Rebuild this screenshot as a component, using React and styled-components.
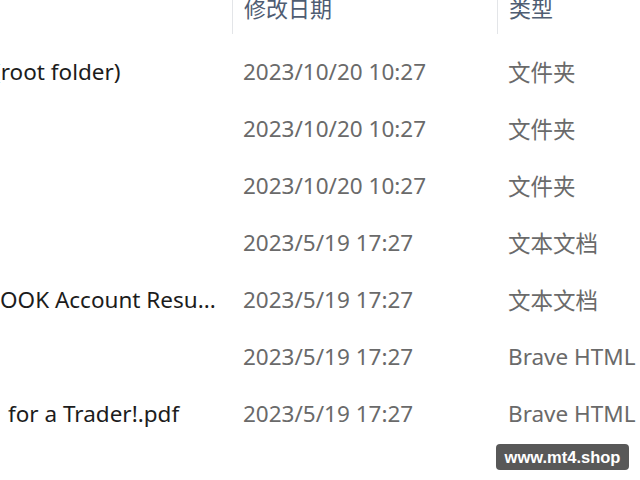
import React from 'react'
import styled, { createGlobalStyle } from 'styled-components'

const GlobalStyle = createGlobalStyle`
    html, body {
        margin: 0;
        padding: 0;
        background: #ffffff;
    }
    body {
        width: 640px;
        height: 480px;
        overflow: hidden;
        font-family: "Noto Sans", "Open Sans", "Noto Sans CJK SC", sans-serif;
    }
`

const Explorer = styled.div`
    position: relative;
    width: 640px;
    height: 480px;
    overflow: hidden;
    background: #fff;
`

const HeaderRow = styled.div`
    display: grid;
    grid-template-columns: 232px 265px 1fr;
    height: 34px;
    margin-bottom: 9px;
`

const HeaderCell = styled.div`
    border-left: ${p => (p.$divider ? '1px solid #e3e5e8' : 'none')};
    padding-left: 11px;
    font-size: 22px;
    line-height: 15px;
    color: #4f5d72;
    font-family: "Noto Sans CJK SC", "Noto Sans", sans-serif;
    white-space: nowrap;
`

const Row = styled.div`
    display: grid;
    grid-template-columns: 232px 265px 1fr;
    align-items: center;
    height: 57px;
    font-size: 22.5px;
`

const NameCell = styled.div`
    overflow: hidden;
    white-space: nowrap;
    color: #1c1c1c;
`

const NameText = styled.span`
    display: inline-block;
    margin-left: ${p => p.$shift}px;
`

const DateCell = styled.div`
    padding-left: 11px;
    color: #6a6a6a;
    white-space: nowrap;
`

const TypeCell = styled.div`
    padding-left: 11px;
    color: #6a6a6a;
    white-space: nowrap;
    overflow: hidden;
    font-family: "Noto Sans", "Noto Sans CJK SC", sans-serif;
`

const Watermark = styled.div`
    position: absolute;
    left: 496px;
    top: 444px;
    width: 133px;
    height: 26px;
    border-radius: 4px;
    background: #585858;
    color: #ffffff;
    font-family: "Liberation Sans", Arial, sans-serif;
    font-weight: bold;
    font-size: 16.5px;
    display: flex;
    align-items: center;
    justify-content: center;
`

const rows = [
    { name: '(root folder)', shift: -6, date: '2023/10/20 10:27', type: '文件夹' },
    { name: '', shift: 0, date: '2023/10/20 10:27', type: '文件夹' },
    { name: '', shift: 0, date: '2023/10/20 10:27', type: '文件夹' },
    { name: '', shift: 0, date: '2023/5/19 17:27', type: '文本文档' },
    { name: 'OOK Account Resu...', shift: 0, date: '2023/5/19 17:27', type: '文本文档' },
    { name: '', shift: 0, date: '2023/5/19 17:27', type: 'Brave HTML Document' },
    { name: 'for a Trader!.pdf', shift: 8, date: '2023/5/19 17:27', type: 'Brave HTML Document' },
]

const App = () => {
    return (
        <Explorer>
            <GlobalStyle />
            <HeaderRow>
                <HeaderCell />
                <HeaderCell $divider>修改日期</HeaderCell>
                <HeaderCell $divider>类型</HeaderCell>
            </HeaderRow>
            {rows.map((row, i) => (
                <Row key={i}>
                    <NameCell>
                        <NameText $shift={row.shift}>{row.name}</NameText>
                    </NameCell>
                    <DateCell>{row.date}</DateCell>
                    <TypeCell>{row.type}</TypeCell>
                </Row>
            ))}
            <Watermark>www.mt4.shop</Watermark>
        </Explorer>
    )
}

export default App
